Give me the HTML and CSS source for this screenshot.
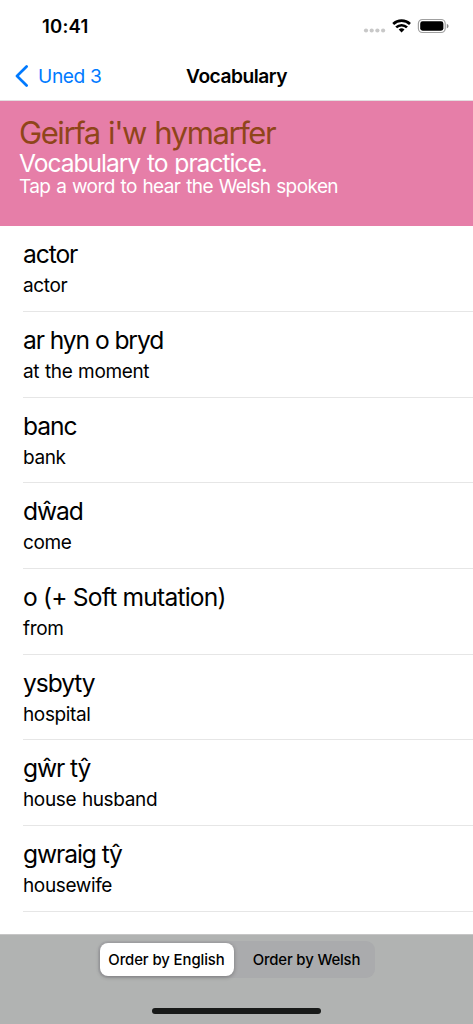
FILE: index.html
```html
<!DOCTYPE html>
<html lang="cy">
<head>
<meta charset="utf-8">
<title>Vocabulary</title>
<link rel="stylesheet" href="styles.css">
</head>
<body>
<div class="screen">
  <header class="top">
    <div class="status">
      <span class="time">10:41</span>
      <svg class="status-icons" width="86" height="18" viewBox="0 0 86 18">
        <g fill="#c8c8c8"><circle cx="3" cy="13.5" r="2.1"/><circle cx="8.7" cy="13.5" r="2.1"/><circle cx="14.4" cy="13.5" r="2.1"/><circle cx="20.1" cy="13.5" r="2.1"/></g>
        <g fill="none" stroke="#000" stroke-width="2.7"><path d="M30.2 6.9a12.2 12.2 0 0 1 16.8 0"/><path d="M33.2 10.4a7.8 7.8 0 0 1 10.8 0"/></g>
        <path d="M35.7 12.6a4.2 4.2 0 0 1 5.8 0L38.6 15.6z" fill="#000"/>
        <rect x="55.4" y="2.5" width="26.8" height="13" rx="4" fill="none" stroke="#a0a0a0" stroke-width="1.2"/>
        <rect x="57.2" y="4.3" width="23.2" height="9.4" rx="2.4"/>
        <path d="M83.8 6.8q1.8.7 1.8 2.3t-1.8 2.3z" fill="#8a8a8a"/>
      </svg>
    </div>
    <nav class="nav">
      <a class="back"><svg width="14" height="22" viewBox="0 0 14 22"><path d="M11.6 1.5 2 11l9.6 9.5" fill="none" stroke="#007aff" stroke-width="2.7" stroke-linecap="round" stroke-linejoin="round"/></svg><span>Uned 3</span></a>
      <h1 class="nav-title">Vocabulary</h1>
    </nav>
  </header>
  <section class="intro">
    <h2 class="intro-title">Geirfa i'w hymarfer</h2>
    <p class="intro-sub">Vocabulary to practice.</p>
    <p class="intro-hint">Tap a word to hear the Welsh spoken</p>
  </section>
  <ul class="words">
    <li class="word"><span class="welsh">actor</span><span class="english">actor</span></li>
    <li class="word"><span class="welsh">ar hyn o bryd</span><span class="english">at the moment</span></li>
    <li class="word"><span class="welsh">banc</span><span class="english">bank</span></li>
    <li class="word"><span class="welsh">dŵad</span><span class="english">come</span></li>
    <li class="word"><span class="welsh note">o (+ Soft mutation)</span><span class="english">from</span></li>
    <li class="word"><span class="welsh">ysbyty</span><span class="english">hospital</span></li>
    <li class="word"><span class="welsh">gŵr tŷ</span><span class="english">house husband</span></li>
    <li class="word"><span class="welsh">gwraig tŷ</span><span class="english">housewife</span></li>
  </ul>
  <footer class="toolbar">
    <div class="segments">
      <button class="segment selected">Order by English</button>
      <button class="segment">Order by Welsh</button>
    </div>
    <div class="home"></div>
  </footer>
</div>
</body>
</html>
```

FILE: styles.css
```css
* { box-sizing: border-box; margin: 0; padding: 0; }
body { background: #fff; font-family: Inter, "Liberation Sans", sans-serif; color: #000; }
.screen { width: 473px; height: 1024px; display: flex; flex-direction: column; overflow: hidden; }
.top { height: 101px; flex: none; border-bottom: 1px solid #e3dde0; }
.status { height: 52px; display: flex; align-items: center; justify-content: space-between; padding: 0 24px 0 42px; }
.time { font-size: 18.5px; font-weight: 600; letter-spacing: 0.2px; line-height: 24px; }
.status-icons { display: block; }
.nav { height: 48px; display: grid; grid-template-columns: 1fr auto 1fr; align-items: center; padding: 0 15px; }
.back { display: flex; align-items: center; gap: 9px; color: #007aff; font-size: 19.2px; letter-spacing: -0.4px; line-height: 24px; }
.nav-title { font-size: 19.2px; font-weight: 600; letter-spacing: -0.5px; line-height: 24px; }
.intro { height: 125px; flex: none; background: #e67ea8; color: #fff; padding: 13px 19px 0; white-space: nowrap; }
.intro-title { color: #8f4519; font-size: 31px; font-weight: 400; line-height: 37px; height: 37px; letter-spacing: -1.42px; word-spacing: 1px; }
.intro-sub { font-size: 24.6px; line-height: 25px; height: 23px; overflow: hidden; letter-spacing: -1.03px; word-spacing: 1px; }
.intro-hint { font-size: 19px; line-height: 26px; letter-spacing: -0.59px; word-spacing: 1px; }
.words { list-style: none; flex: 1; padding: 0.2px 0 0 23px; }
.word { height: 85.7px; border-bottom: 1px solid #e6e6e6; padding-top: 13px; display: flex; flex-direction: column; }
.welsh { font-size: 24.6px; line-height: 30px; letter-spacing: -1.08px; }
.note { letter-spacing: -0.8px; }
.english { font-size: 19px; line-height: 24px; margin-top: 5px; letter-spacing: -0.37px; word-spacing: 0.8px; }
.toolbar { height: 90px; flex: none; background: #b1b3b2; border-top: 1px solid #c6c6c6; display: flex; flex-direction: column; align-items: center; padding-top: 6px; }
.segments { width: 277px; height: 37px; border-radius: 9px; background: #aaabad; display: grid; grid-template-columns: 134px 1fr; padding: 2px; margin-right: 1px; }
.segment { border: 0; background: none; font: 500 14.9px/32px Inter, "Liberation Sans", sans-serif; letter-spacing: -0.15px; color: #000; white-space: nowrap; border-radius: 8px; padding: 1px 0 0 7px; height: 33px; }
.selected { background: #fff; box-shadow: 0 1px 4px rgba(0, 0, 0, .3); padding-left: 0; letter-spacing: -0.08px; }
.home { width: 169px; height: 6px; border-radius: 3px; background: #181a19; margin-top: 30px; }
```
